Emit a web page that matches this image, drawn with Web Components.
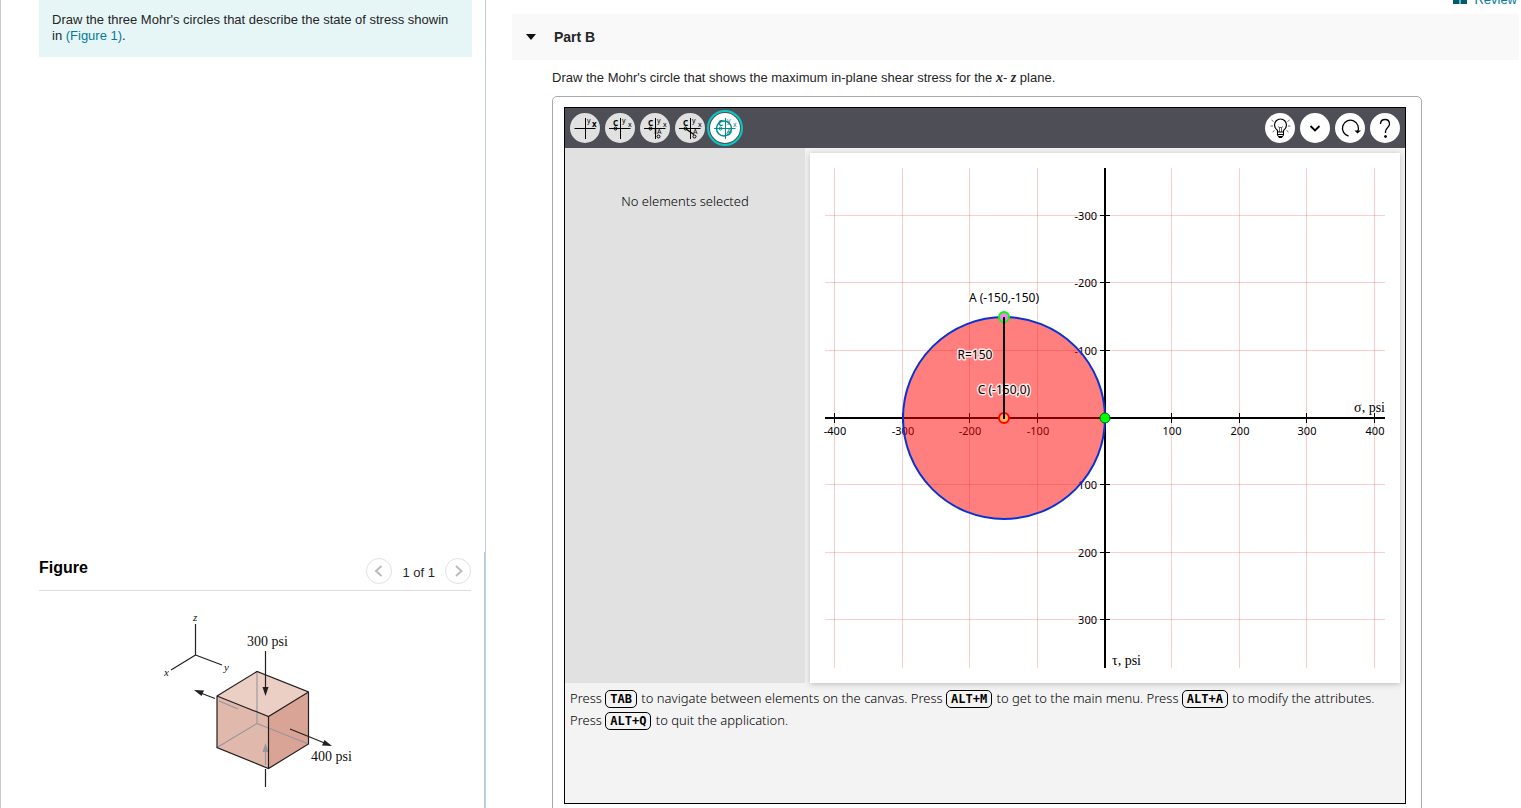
<!DOCTYPE html>
<html lang="en">
<head>
<meta charset="utf-8">
<title>Mohr's circle – Part B</title>
<style>
  body { margin: 0; font: 13px/16px "Liberation Sans", Arial, sans-serif; color: #252525; background: #fff; }
</style>
</head>
<body>
<study-page>
  <problem-note slot="side">Draw the three Mohr's circles that describe the state of stress showin in <a href="#figure">(Figure 1)</a>.</problem-note>
  <figure-pane slot="side" id="figure"><stress-cube></stress-cube></figure-pane>
  <review-bar slot="main"></review-bar>
  <part-section slot="main" heading="Part B">
    <span slot="prompt">Draw the Mohr's circle that shows the maximum in-plane shear stress for the <math-var>x</math-var>-<math-var>z</math-var> plane.</span>
    <mohr-applet></mohr-applet>
  </part-section>
</study-page>

<script>
const define = (name, html, setup) => {
  const template = document.createElement('template');
  template.innerHTML = html;
  customElements.define(name, class extends HTMLElement {
    constructor() {
      super();
      this.attachShadow({ mode: 'open' }).append(template.content.cloneNode(true));
    }
    connectedCallback() { if (setup) setup(this, this.shadowRoot); }
  });
};

define('study-page', `
<style>
  :host { display: grid; grid-template-columns: 486px minmax(0, 1fr); height: 100vh; overflow: hidden; }
  aside { display: flex; flex-direction: column; justify-content: space-between; box-sizing: border-box; border-left: 1px solid #ccc; border-right: 1px solid #c3cfdd; min-height: 0; }
  main { padding: 0 2px 0 26px; min-width: 0; overflow: hidden; }
</style>
<aside><slot name="side"></slot></aside>
<main><slot name="main"></slot></main>`);

define('problem-note', `
<style>
  :host { display: block; margin: 0 13px 0 38px; padding: 12px 13px 13px; background: #e6f6f6; }
  ::slotted(a) { color: #047a9c; text-decoration: none; }
</style>
<slot></slot>`);

define('math-var', `
<style>:host { font: italic bold 14px/16px "Liberation Serif", serif; }</style><slot></slot>`);

define('figure-pane', `
<style>
  :host { display: block; height: 256px; border-right: 1px solid #b9cbdc; padding: 0 13px 0 38px; box-sizing: border-box; }
  header { display: flex; align-items: center; height: 38px; border-bottom: 1px solid #ddd; }
  h2 { margin: 0 auto 0 0; font-size: 16px; line-height: 20px; color: #000; padding-bottom: 6px; }
  button { width: 26px; height: 26px; border: 1px solid #e2e2e2; border-radius: 50%; background: #fff; padding: 0; display: grid; place-items: center; }
  svg { width: 24px; height: 24px; fill: none; stroke: #bbb; stroke-width: 2; }
  span { padding: 4px 10px 0; }
</style>
<header>
  <h2>Figure</h2>
  <button aria-label="Previous figure"><svg viewBox="0 0 24 24"><path d="M14.500 7L9 12l5.500 5"/></svg></button>
  <span>1 of 1</span>
  <button aria-label="Next figure"><svg viewBox="0 0 24 24"><path d="M10 7l5.500 5L10 17"/></svg></button>
</header>
<slot></slot>`);

define('stress-cube', `
<style>
  :host { display: block; margin-top: 9px; }
  svg { display: block; width: 210px; height: 208px; margin: 0 auto; }
  .e { fill: none; stroke: #231f20; stroke-width: 1.200; }
  .h { fill: none; stroke: #96979b; stroke-width: 1.100; }
  text { font: 14px "Liberation Serif", serif; fill: #111; }
  .i { font: italic 11px "Liberation Serif", serif; }
</style>
<svg viewBox="0 0 210 208" role="img" aria-label="Stress element">
  <path class="e" d="M45.500 24V55M45.500 55L21 70M45.500 55L72 65"/>
  <text class="i" x="43" y="21">z</text><text class="i" x="14" y="76">x</text><text class="i" x="74" y="71">y</text>
  <path fill="#ebcfc5" d="M67 96L107 71.500 158.500 92 118.500 116.500Z"/>
  <path fill="#e1b8ac" d="M67 96L118.500 116.500V168.500L67 147.500Z"/>
  <path fill="#d9a496" d="M118.500 116.500L158.500 92V144L118.500 168.500Z"/>
  <path class="h" d="M107 71.500V123.500L67 147.500M107 123.500L158.500 144M69 101L88 109M115.500 165V150"/>
  <path fill="#96979b" d="M115.500 143L118.500 152H112.500Z"/>
  <path class="e" d="M67 96L107 71.500 158.500 92V144L118.500 168.500 67 147.500ZL118.500 116.500 158.500 92M118.500 116.500V168.500"/>
  <path class="e" d="M115.500 51V90M115.500 169V187M65 98.500L48 92M140 129L177 144"/>
  <path fill="#231f20" d="M115.500 96L112.500 87H118.500ZM44 90L54 90.500 51.500 96ZM182 146L172 145.500 174.500 140Z"/>
  <text x="97" y="46">300 psi</text><text x="161" y="161">400 psi</text>
</svg>`);

define('review-bar', `
<style>
  :host { display: flex; justify-content: flex-end; align-items: flex-end; height: 14px; }
  a { display: flex; gap: 7px; color: #047a9c; text-decoration: none; padding-bottom: 6px; margin-right: 2px; }
  svg { width: 14px; height: 14px; fill: #005a70; }
</style>
<a href="#review"><svg viewBox="0 0 14 14"><path d="M0 1Q4 0 6.500 1.500V12H0ZM7.500 1.500Q10 0 14 1V12H7.500Z"/></svg>Review</a>`);

define('part-section', `
<style>
  :host { display: block; }
  header { display: flex; align-items: center; gap: 17px; height: 46px; padding-left: 13px; background: #f9f9f9; }
  header button { border: 0; background: none; padding: 0; width: 12px; height: 12px; display: grid; place-items: center; }
  h2 { margin: 0; font-size: 14px; line-height: 18px; }
  svg { width: 12px; height: 12px; }
  p { margin: 10px 0; padding-left: 40px; line-height: 16px; }
  .frame { box-sizing: border-box; margin-left: 40px; max-width: 870px; border: 1px solid #aaa; border-radius: 5px; padding: 10px 15px 40px 11px; }
</style>
<header><button aria-label="Collapse part"><svg viewBox="0 0 12 12"><path d="M1 3h10L6 9z" fill="#111"/></svg></button><h2></h2></header>
<p><slot name="prompt"></slot></p>
<div class="frame"><slot></slot></div>`,
(el, root) => { root.querySelector('h2').textContent = el.getAttribute('heading'); });

define('tool-button', `
<style>
  :host { display: block; }
  button { display: block; width: 30px; height: 30px; padding: 0; border: 0; border-radius: 50%; background: #e1e1e1; color: #000; }
  :host([plain]) button { background: #fff; }
  :host([active]) button { background: #fff; color: #078a8e; outline: 2px solid #06c8c8; outline-offset: 1px; }
  svg { display: block; width: 30px; height: 30px; fill: none; stroke: currentColor; stroke-width: 1; stroke-linecap: butt; }
  text { font: 7px "Noto Sans", sans-serif; fill: currentColor; stroke: none; }
  .c { font-size: 8px; font-weight: bold; }
</style>
<button><svg viewBox="0 0 30 30"></svg></button>`,
(el, root) => {
  const axes = '<path d="M4 15.500H25.500M15.500 5V26"/>';
  const xy = '<text x="17" y="10">y</text><text x="23" y="14">x</text>';
  const c = '<text class="c" x="8" y="13">C</text><circle cx="10.500" cy="15.500" r="1.500"/>';
  const icons = {
    axes: ['Axes', '<path d="M4.500 15.500H25.500M15.500 5V26"/><text x="17" y="10">y</text><text class="c" x="22" y="14">x</text>'],
    center: ['Center point', axes + xy + c],
    point: ['Point', axes + xy + c + '<path stroke-width="1.500" d="M15.500 15V21"/><text x="17" y="21">A</text><circle cx="18.500" cy="23.500" r="1.500"/>'],
    radius: ['Radius', axes + xy + c + '<path stroke-width="1.500" d="M11 16L19 21.500"/><text x="18" y="21">A</text><circle cx="19.500" cy="23.500" r="1.500"/>'],
    circle: ['Circle', '<circle cx="14" cy="15.500" r="7.500" stroke-width="1.500"/>' + axes + xy + c + '<text x="17" y="20">A</text><circle cx="18.500" cy="20.500" r="1.500"/>'],
    hint: ['Hints', '<path stroke-width="1.200" d="M12.500 19V17.500C10 15.500 9.500 14 9.500 12A6 6 0 0 1 21.500 12C21.500 14 21 15.500 18.500 17.500V19Z"/><path d="M12.500 19V22L14 24.500H17L18.500 22V19M13 21.500H18M14 23.500H17"/><path stroke-width=".6" d="M14.500 19V14.500L13 13.500M16.500 19V14.500L18 13.500M14.500 14.500H16.500M6.500 7L8.500 8.500M24.500 7L22.500 8.500M5.500 13H8M23 13H25.500M7.500 19L9.500 17.500M21.500 17.500L23.500 19"/>'],
    more: ['More', '<path stroke-width="1.800" d="M10.500 13L15 17.500L19.500 13"/>'],
    reset: ['Reset', '<path stroke-width="1.300" d="M13.500 23A8 8 0 1 1 22.500 19"/><path fill="currentColor" stroke="none" d="M19.500 17.500L22.500 20.500 26 17.500Z"/>'],
    help: ['Help', '<path stroke-width="1.300" d="M10.500 11C10.500 8 12.500 6.500 15 6.500C18 6.500 19.500 8.500 19.500 11C19.500 14.500 15.500 15 15.500 18.500V20"/><circle cx="15.500" cy="23.500" r="1" fill="currentColor"/>'],
  };
  const [label, art] = icons[el.getAttribute('icon')];
  root.querySelector('button').setAttribute('aria-label', label);
  root.querySelector('svg').innerHTML = art;
});

define('mohr-chart', `
<style>
  :host { display: block; }
  svg { display: block; width: 100%; background: #fff; box-shadow: 0 1px 6px #bbb; }
  .grid { stroke: #f00; stroke-opacity: .200; }
  .axis { stroke: #000; stroke-width: 2; }
  .tick { stroke: #000; }
  text { font: 11px "Noto Sans", sans-serif; fill: #000; }
  .mid { text-anchor: middle; }
  .end { text-anchor: end; }
  .title { font: 14px "Liberation Serif", serif; }
  .tag { font-size: 12px; text-anchor: middle; stroke: #fff; stroke-width: 3; stroke-opacity: .800; paint-order: stroke; stroke-linejoin: round; }
</style>
<svg viewBox="0 0 590 530" role="img" aria-label="Mohr's circle chart">
  <g class="scale"></g>
  <path class="axis" d="M15 265H575M295 15V515"/>
  <text class="title end" x="575" y="259">σ, psi</text>
  <text class="title" x="302" y="512">τ, psi</text>
  <circle cx="194" cy="265" r="101" fill="#f00" fill-opacity=".5" stroke="#0a32d2" stroke-width="2"/>
  <circle cx="194" cy="164" r="5" fill="#ee82ee" stroke="#0f0" stroke-width="2"/>
  <circle cx="194" cy="265" r="5" fill="#ffb450" stroke="#f00" stroke-width="2"/>
  <text class="tag" x="165" y="206">R=150</text>
  <text class="tag" x="194" y="241">C (-150,0)</text>
  <text class="tag" x="194" y="149">A (-150,-150)</text>
  <path class="axis" d="M194 164V266"/>
  <circle cx="295" cy="265" r="5" fill="#0f0" stroke="#062" stroke-width="1"/>
</svg>`,
(el, root) => {
  const columns = { '-400': 24.5, '-300': 92.5, '-200': 159.5, '-100': 227.5, 100: 361.5, 200: 429.5, 300: 496.5, 400: 564.5 };
  const rows = { '-300': 62.5, '-200': 129.5, '-100': 197.5, 100: 331.5, 200: 399.5, 300: 466.5 };
  let out = '';
  for (const [value, x] of Object.entries(columns))
    out += `<path class="grid" d="M${x} 15V515"/><path class="tick" d="M${x} 260V270"/><text class="mid" x="${Math.ceil(x)}" y="282">${value}</text>`;
  for (const [value, y] of Object.entries(rows))
    out += `<path class="grid" d="M15 ${y}H575"/><path class="tick" d="M290 ${y}H300"/><text class="end" x="287" y="${Math.ceil(y) + 4}">${value}</text>`;
  root.querySelector('.scale').innerHTML = out;
});

define('mohr-applet', `
<style>
  :host { display: block; border: 1px solid #000; background: #f3f3f3; color: #000; font: 350 13px/22px "Noto Sans", "Open Sans", sans-serif; }
  nav { display: flex; gap: 5px; align-items: center; height: 40px; padding: 0 5px; background: #4e4e57; }
  .gap { flex: 1; }
  .body { display: grid; grid-template-columns: 240px minmax(0, 1fr); }
  .props { background: #e1e1e1; text-align: center; padding-top: 42px; }
  .stage { padding: 5px 5px 0; }
  .help { min-height: 116px; padding: 4px 5px 0; }
  kbd { font: bold 12px/14px "DejaVu Sans Mono", monospace; border: 1px solid #000; border-radius: 5px; padding: 1px 4px; margin-right: 1px; }
</style>
<nav>
  <tool-button icon="axes"></tool-button><tool-button icon="center"></tool-button><tool-button icon="point"></tool-button><tool-button icon="radius"></tool-button><tool-button icon="circle" active></tool-button>
  <span class="gap"></span>
  <tool-button icon="hint" plain></tool-button><tool-button icon="more" plain></tool-button><tool-button icon="reset" plain></tool-button><tool-button icon="help" plain></tool-button>
</nav>
<div class="body">
  <div class="props">No elements selected</div>
  <div class="stage"><mohr-chart></mohr-chart></div>
</div>
<div class="help">Press <kbd>TAB</kbd> to navigate between elements on the canvas. Press <kbd>ALT+M</kbd> to get to the main menu. Press <kbd>ALT+A</kbd> to modify the attributes. Press <kbd>ALT+Q</kbd> to quit the application.</div>`);
</script>
</body>
</html>
